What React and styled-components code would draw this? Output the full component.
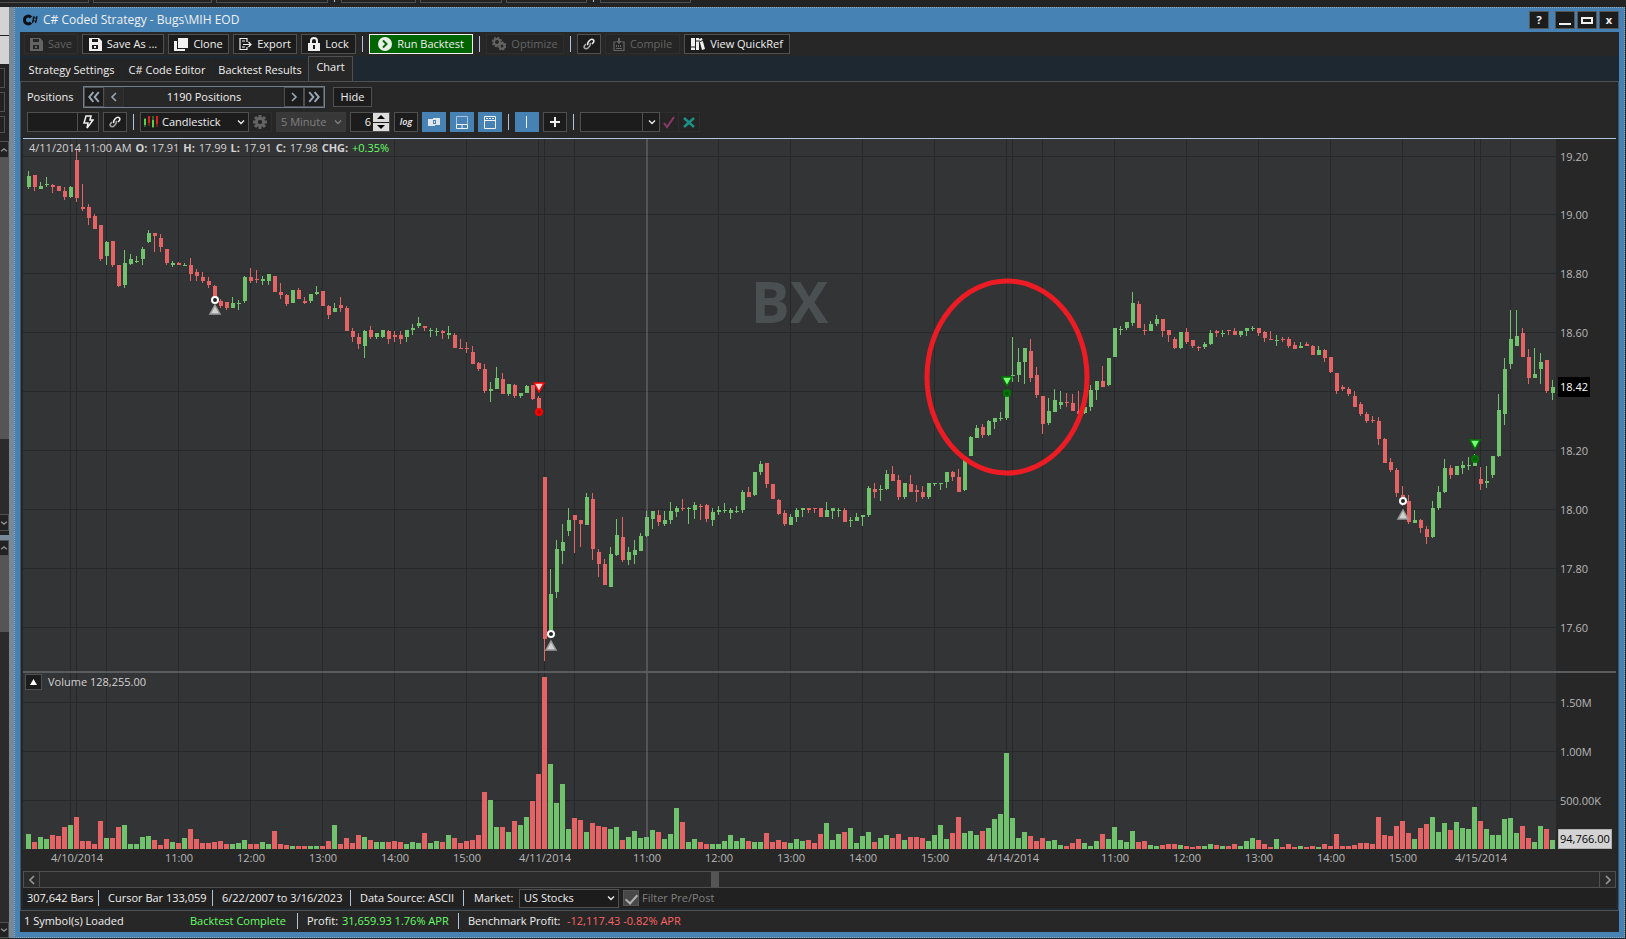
import styled, { createGlobalStyle, css } from 'styled-components';

const GlobalStyle = createGlobalStyle`
  * {
    box-sizing: border-box;
  }
  body {
    margin: 0;
    background: #232323;
    color: #f0f0f0;
    font: 11px/16px 'Open Sans', 'Noto Sans', sans-serif;
  }
  button, input, select {
    font: inherit;
    color: inherit;
    border-radius: 0;
    margin: 0;
    padding: 0;
  }
`;

const GREEN = '#70c26d';
const RED = '#e46466';

// direction, high, body top, body bottom, low, volume
const BARS = `
g 32 37 48 50 15,r 36 36 48 52 7,g 43 47 50 50 12,g 38 45 46 48 10,r 45 46 48 54 14,r 47 47 52 52 13,
r 48 52 58 61 22,g 47 48 58 59 24,r 10 21 59 63 32,r 45 68 70 72 8,r 65 68 79 86 8,r 75 77 90 90 5,
r 86 86 120 122 28,g 102 103 117 126 11,r 102 102 126 128 11,r 126 126 147 148 22,g 111 124 146 149 24,g 115 120 125 126 5,
g 117 122 123 124 5,g 108 110 120 126 12,g 91 94 103 104 13,r 94 94 97 113 9,r 95 99 108 113 4,r 110 110 124 126 10,
g 122 124 126 128 7,r 123 124 126 126 6,g 124 126 127 127 11,r 119 126 135 142 20,r 130 133 137 142 10,r 133 138 142 144 6,
r 138 142 146 149 6,r 146 147 160 160 7,r 160 162 167 169 8,r 163 163 169 171 5,g 158 164 169 169 5,g 161 164 165 171 6,
g 137 138 162 164 9,r 129 138 142 144 5,r 131 140 141 144 5,g 137 140 142 146 7,g 135 135 142 146 5,r 137 137 153 153 18,
r 144 153 156 160 5,r 155 156 165 167 4,g 151 151 164 164 3,r 149 151 160 160 3,r 158 162 164 165 3,g 155 155 162 164 3,
g 147 153 155 156 3,r 152 152 167 167 3,r 166 167 176 180 8,g 164 169 173 173 24,r 158 166 169 173 5,r 167 169 192 192 11,
r 189 192 198 203 6,r 194 198 205 210 14,g 191 192 207 219 12,r 187 191 198 200 9,g 194 194 198 200 7,g 191 191 198 199 7,
r 191 192 200 205 7,r 192 196 198 203 8,r 192 196 200 205 7,g 191 191 198 203 5,g 185 189 191 196 7,g 178 184 187 189 6,
r 187 187 189 192 16,g 189 191 192 198 6,g 189 192 193 197 8,r 191 192 194 200 7,g 187 194 196 200 14,r 194 196 209 209 11,
r 200 209 210 210 6,r 203 209 210 214 8,r 207 213 225 225 9,r 223 224 230 232 14,r 225 230 252 254 57,g 243 250 252 263 49,
g 228 239 250 250 22,r 234 240 255 255 22,g 245 245 255 257 17,r 245 246 257 259 28,g 254 254 257 259 24,g 246 247 254 254 32,
r 246 246 260 261 48,r 257 259 273 273 75,r 338 338 500 522 172,g 430 455 491 494 85,g 401 410 453 459 46,g 385 403 412 425 65,
g 369 381 392 397 20,r 376 376 381 414 31,r 381 381 385 408 29,g 354 358 386 386 17,r 354 360 410 421 26,r 410 413 425 438 23,
r 420 425 446 446 22,g 408 415 448 448 20,g 380 396 416 417 22,r 378 398 421 423 9,g 408 413 421 426 12,g 401 411 416 425 18,
g 394 397 412 412 11,g 372 378 397 398 12,g 372 372 380 390 19,r 371 376 383 387 17,g 372 381 385 387 10,g 363 372 381 385 15,
g 367 369 373 378 41,r 360 369 370 372 27,g 368 369 370 385 7,g 363 366 371 380 10,r 365 367 368 381 7,r 365 366 380 383 5,
g 369 373 381 387 5,g 367 371 373 376 5,g 364 371 372 374 8,g 369 371 374 380 14,g 367 372 373 374 8,g 351 353 371 374 11,
r 348 353 358 358 8,g 333 333 356 357 7,g 322 325 333 336 7,r 324 324 345 349 16,r 345 345 360 360 7,r 360 361 375 376 9,
r 371 374 385 387 7,g 375 378 386 386 6,g 369 371 378 383 10,g 369 369 371 378 8,r 369 369 371 374 9,r 369 369 370 374 6,
r 369 369 378 378 15,g 363 371 378 378 26,g 369 369 372 380 9,g 369 371 372 378 15,r 369 371 383 383 17,g 378 381 382 388 21,
g 374 378 382 382 6,g 376 376 378 387 13,g 347 349 376 378 17,r 344 350 353 359 7,g 346 350 351 362 11,g 331 335 350 351 14,
r 327 335 342 342 11,r 336 341 358 361 15,g 344 344 358 360 9,r 336 345 353 353 12,r 346 351 353 363 12,r 347 353 358 360 11,
g 344 344 358 360 8,g 344 344 345 347 14,g 344 344 345 351 24,g 333 333 343 349 10,r 332 333 338 342 16,r 330 338 353 353 32,
g 321 321 351 352 16,g 297 298 317 317 18,g 286 289 299 299 14,r 285 288 296 299 18,g 281 282 296 297 21,g 279 279 283 290 30,
g 273 279 280 282 35,g 251 253 279 281 96,g 198 236 237 243 31,g 209 223 236 243 11,g 209 209 223 245 17,r 200 212 239 243 13,
r 228 236 256 259 8,r 257 257 285 295 11,g 259 272 284 286 8,g 250 261 273 273 9,g 252 263 266 270 4,r 254 263 264 268 3,
r 255 264 272 272 6,r 252 272 275 275 10,g 267 268 274 275 6,g 246 251 268 272 3,g 242 242 251 261 8,r 227 242 248 248 15,
g 219 219 246 247 10,g 189 189 218 218 22,g 187 190 191 196 9,g 183 183 189 191 7,g 153 164 184 187 18,r 162 165 189 189 7,
r 185 191 192 196 8,g 182 185 192 192 4,g 176 180 185 187 3,r 180 180 192 198 4,r 191 191 196 203 5,r 198 200 209 210 5,
g 193 193 209 210 4,r 189 193 203 205 3,r 201 201 207 209 2,r 207 208 209 212 3,g 203 205 208 210 3,g 191 194 205 206 5,
r 191 192 194 198 4,g 191 194 195 198 3,r 191 191 192 196 3,r 189 192 196 196 5,g 192 192 196 198 3,g 189 189 192 197 8,
g 187 189 190 192 11,r 189 189 194 197 9,r 192 193 199 203 5,r 192 200 201 201 2,g 196 201 202 207 10,r 198 200 201 203 2,
r 198 200 207 209 5,r 203 206 210 210 2,g 203 207 209 209 3,r 203 205 207 207 2,r 206 207 216 216 3,g 207 211 216 216 2,
r 210 211 219 223 5,r 218 218 233 234 3,r 234 234 252 255 15,r 246 248 250 252 3,r 248 250 255 257 3,r 252 257 268 268 4,
r 263 265 275 277 6,r 273 275 282 284 6,r 277 281 282 284 5,r 278 282 300 306 32,r 299 300 324 324 14,r 319 323 331 333 13,
r 329 331 354 358 23,r 347 356 362 367 28,r 356 362 383 385 16,g 371 381 384 384 10,r 380 381 389 394 21,r 387 390 398 405 25,
g 362 369 398 399 32,g 347 353 369 371 17,g 320 329 353 354 26,r 326 329 336 340 19,g 327 327 336 336 27,g 322 326 329 335 21,
g 318 326 327 331 20,g 315 318 327 327 42,r 328 340 345 351 28,g 327 342 344 349 20,g 317 317 336 339 14,g 255 271 317 318 14,
g 219 230 275 286 30,g 171 200 225 230 31,g 171 197 207 207 16,r 189 194 218 218 23,r 210 218 239 245 11,g 209 235 239 239 7,
g 214 223 230 245 23,r 221 221 252 254 20,g 241 248 254 261 9`
  .trim()
  .split(',')
  .map((bar, i) => {
    const [dir, ...rest] = bar.trim().split(' ');
    const [high, top, bottom, low, volume] = rest.map(Number);
    return { x: 4 + i * 6, color: dir === 'g' ? GREEN : RED, high, top, bottom, low, volume };
  });

const PLOT_W = 1533;
const PRICE_H = 532;
const VOLUME_H = 176;
const CURSOR_X = 623;

const GRID_X = [
  47, 53, 83, 155, 227, 299, 371, 443, 515, 521, 551, 695, 767, 839, 911, 983, 989, 1019, 1091, 1163,
  1235, 1307, 1379, 1451, 1457, 1487,
];
const PRICE_TICKS = [
  [17, '19.20'], [75, '19.00'], [134, '18.80'], [193, '18.60'], [252, ''],
  [311, '18.20'], [370, '18.00'], [429, '17.80'], [488, '17.60'],
];
const VOLUME_TICKS = [[29, '1.50M'], [78, '1.00M'], [127, '500.00K']];
const TIME_TICKS = [
  [54, '4/10/2014'], [156, '11:00'], [228, '12:00'], [300, '13:00'], [372, '14:00'], [444, '15:00'],
  [522, '4/11/2014'], [624, '11:00'], [696, '12:00'], [768, '13:00'], [840, '14:00'], [912, '15:00'],
  [990, '4/14/2014'], [1092, '11:00'], [1164, '12:00'], [1236, '13:00'], [1308, '14:00'], [1380, '15:00'],
  [1458, '4/15/2014'],
];

/* ---------- desktop and window frame ---------- */

const Desktop = styled.div`
  display: flex;
  flex-direction: column;
  height: 100vh;
  overflow: hidden;
`;

const BackToolbar = styled.div`
  display: flex;
  gap: 4px;
  height: 7px;
  flex: none;
`;

const BackButton = styled.div`
  width: ${(p) => p.$w}px;
  height: 3px;
  border: 1px solid #505050;
  border-top: 0;
  border-left-width: ${(p) => (p.$first ? 0 : 1)}px;
`;

const BackSep = styled.div`
  width: 1px;
  height: 2px;
  margin: 0 2px;
  background: #b0c4de;
`;

const Work = styled.div`
  display: flex;
  flex: 1;
  min-height: 0;
  padding: 0 1px 1px 0;
`;

const Side = styled.div`
  display: flex;
  flex-direction: column;
  width: 9px;
  overflow: hidden;
`;

const SideBlock = styled.div`
  flex: ${(p) => (p.$grow ? 1 : 'none')};
  height: ${(p) => p.$h}px;
  margin-top: ${(p) => p.$mt || 0}px;
  background: ${(p) => p.$bg || '#222'};
  ${(p) =>
    p.$box &&
    css`
      border: 1px solid #505050;
      border-left: 0;
      width: 5px;
    `}
`;

const SideArrow = styled(SideBlock)`
  display: flex;
  align-items: center;
  border: 1px solid #505050;
  border-left: 0;
  color: #999;
`;

const Gutter = styled.div`
  width: 5px;
  background: #778899;
`;

const Window = styled.main`
  display: flex;
  flex-direction: column;
  flex: 1;
  min-width: 0;
  padding: 0 5px 5px;
  border: 1px dotted #98a4ae;
  background: #4682b4;
`;

const TitleBar = styled.header`
  display: flex;
  align-items: center;
  height: 24px;
  padding-left: 3px;
`;

const Title = styled.h1`
  flex: 1;
  margin: 0 0 0 5px;
  font-size: 12px;
  font-weight: 400;
`;

const WindowButton = styled.button`
  display: grid;
  place-items: center;
  width: 20px;
  height: 18px;
  margin-left: ${(p) => p.$gap || 2}px;
  border: 1px solid #555;
  background: #1c1c1c;
  font-weight: 700;
`;

const Body = styled.div`
  display: flex;
  flex-direction: column;
  flex: 1;
  min-height: 0;
  background: #272727;
`;

/* ---------- toolbars ---------- */

const Toolbar = styled.div`
  display: flex;
  align-items: center;
  gap: 4px;
  height: 24px;
  padding: 0 4px;
`;

const Sep = styled.span`
  flex: none;
  width: 1px;
  height: 16px;
  margin: 0 2px;
  background: #b0c4de;
`;

const Button = styled.button`
  display: flex;
  flex: none;
  align-items: center;
  justify-content: center;
  gap: 5px;
  width: ${(p) => p.$w || 24}px;
  height: 20px;
  border: 1px solid #505050;
  background: #1c1c1c;
  white-space: nowrap;
  svg {
    flex: none;
  }
  &:disabled {
    border-color: #2e2e2e;
    background: #252525;
    color: #646464;
  }
  ${(p) =>
    p.$run &&
    css`
      border-color: #f0f0f0;
      background: #006400;
    `}
  ${(p) =>
    p.$active &&
    css`
      border-color: #4682b4;
      background: #4682b4;
    `}
`;

const TabBar = styled.nav`
  display: flex;
  align-items: flex-end;
  height: 25px;
  padding-left: 2px;
  background: #1e2830;
`;

const Tab = styled.button`
  width: ${(p) => p.$w}px;
  height: 22px;
  margin-right: 1px;
  border: 0;
  background: #242424;
  white-space: nowrap;
  ${(p) =>
    p.$active &&
    css`
      height: 25px;
      margin: 0;
      padding-bottom: 4px;
      border: 1px solid #505050;
      border-bottom: 0;
      background: #272727;
    `}
`;

const Panel = styled.section`
  display: flex;
  flex-direction: column;
  flex: 1;
  min-height: 0;
  padding: 0 2px 2px;
  border: 1px solid #505050;
  background: #1e2830;
`;

const Controls = styled.div`
  display: flex;
  flex-direction: column;
  gap: 4px;
  padding: 4px 4px 6px;
  border-bottom: 1px solid #b0c4de;
  background: #272727;
`;

const Row = styled.div`
  display: flex;
  align-items: center;
  gap: 4px;
`;

const PositionsLabel = styled.span`
  width: 52px;
`;

const Pager = styled.div`
  display: flex;
  width: 242px;
  height: 22px;
  margin-right: 4px;
  border: 1px solid #708090;
`;

const PagerButton = styled.button`
  display: grid;
  place-items: center;
  width: 20px;
  border: 1px solid #505050;
  background: #1c1c1c;
  color: #9aa7b5;
  &:disabled {
    border-color: #303030;
    background: #2a2a2a;
  }
`;

const PagerText = styled.span`
  flex: 1;
  padding-top: 2px;
  text-align: center;
`;

const Joined = styled.div`
  display: flex;
  > * + * {
    margin-left: -1px;
  }
`;

const TextBox = styled.input`
  width: ${(p) => p.$w}px;
  height: 20px;
  padding: 0 4px;
  border: 1px solid #505050;
  background: #1c1c1c;
  outline: none;
`;

const Combo = styled.span`
  position: relative;
  display: inline-flex;
  align-items: center;
  width: ${(p) => p.$w}px;
  height: ${(p) => p.$h || 20}px;
  border: 1px solid ${(p) => (p.$off ? '#3a3a3a' : '#505050')};
  background: ${(p) => (p.$off ? '#383838' : '#1c1c1c')};
  color: ${(p) => (p.$off ? '#808080' : '#f0f0f0')};
`;

const Select = styled.select`
  flex: 1;
  min-width: 0;
  height: 100%;
  padding-left: 4px;
  border: 0;
  background: none;
  appearance: none;
  outline: none;
  &:disabled {
    color: inherit;
    opacity: 1;
  }
`;

const ComboArrow = styled.svg`
  position: absolute;
  top: 50%;
  right: 3px;
  transform: translateY(-50%);
  pointer-events: none;
`;

const ComboIcon = styled.svg`
  flex: none;
  margin-left: 3px;
`;

const ComboDivider = styled.span`
  width: 1px;
  height: 100%;
  margin-right: 16px;
  background: #505050;
`;

const NumberBox = styled.div`
  display: flex;
  width: 40px;
  height: 20px;
  border: 1px solid #505050;
  background: #1c1c1c;
`;

const NumberInput = styled.input`
  flex: 1;
  min-width: 0;
  padding-right: 1px;
  border: 0;
  background: none;
  text-align: right;
  outline: none;
`;

const Spinner = styled.div`
  display: flex;
  flex-direction: column;
  width: 16px;
  gap: 1px;
  margin-left: 1px;
`;

const SpinButton = styled.button`
  display: grid;
  flex: 1;
  place-items: center;
  border: 0;
  background: #dcdcdc;
  color: #000;
`;

const LogText = styled.i`
  font-size: 9px;
  font-weight: 600;
`;

/* ---------- chart ---------- */

const Chart = styled.div`
  display: grid;
  grid-template-columns: minmax(0, 1fr) 60px;
  grid-template-rows: minmax(0, 532fr) 2px minmax(0, 176fr) 22px;
  flex: 1;
  min-height: 0;
  background: #272727;
`;

const Pane = styled.div`
  position: relative;
  background: #333435;
`;

const Plot = styled.svg`
  position: absolute;
  inset: 0;
  width: 100%;
  height: 100%;
`;

const Axis = styled.div`
  position: relative;
`;

const AxisSvg = styled.svg`
  display: block;
  width: 100%;
  height: 100%;
  fill: #b8b8b8;
  font-size: 11px;
`;

const Divider = styled.div`
  grid-column: 1 / -1;
  background: #5a5d5f;
`;

const Watermark = styled.div`
  position: absolute;
  inset: 0 0 39%;
  display: grid;
  place-items: center;
  color: #4a4f51;
  font-size: 58px;
  font-weight: 700;
`;

const Quote = styled.div`
  position: relative;
  padding: 1px 0 0 6px;
  color: #d3d3d3;
  b {
    margin: 0 1px;
  }
`;

const Gain = styled.span`
  color: #66ff66;
`;

const Loss = styled.span`
  color: #ff6464;
`;

const VolumeHead = styled.div`
  position: relative;
  display: flex;
  align-items: center;
  gap: 6px;
  padding: 1px 2px;
  color: #d3d3d3;
`;

const Collapse = styled.button`
  display: grid;
  place-items: center;
  width: 17px;
  height: 16px;
  border: 1px solid #505050;
  background: #1c1c1c;
`;

const Tag = styled.span`
  position: absolute;
  left: 2px;
  padding: 2px;
  background: #000;
  color: #fff;
`;

const PriceTag = styled(Tag)`
  top: 44.7%;
`;

const VolumeTag = styled(Tag)`
  bottom: 0;
  padding: 1px;
  border: 1px solid #b0b0b0;
  background: #d3d3d3;
  color: #000;
  white-space: nowrap;
`;

const ScrollBar = styled.div`
  display: flex;
  height: 17px;
  border: 1px solid #505050;
  background: #2b2b2b;
`;

const ScrollButton = styled.button`
  display: grid;
  place-items: center;
  width: 16px;
  border: 0 solid #505050;
  border-width: ${(p) => (p.$end ? '0 0 0 1px' : '0 1px 0 0')};
  background: #2b2b2b;
  color: #999;
`;

const Track = styled.div`
  flex: 1;
  display: grid;
  grid-template-columns: 671fr 8px 881fr;
`;

const Thumb = styled.div`
  grid-column: 2;
  background: #555;
`;

/* ---------- status lines ---------- */

const InfoBar = styled.div`
  display: flex;
  align-items: center;
  height: 20px;
  padding-left: 4px;
  background: #212121;
  white-space: nowrap;
`;

const InfoItem = styled.span`
  width: ${(p) => p.$w}px;
`;

const InfoSep = styled(Sep)`
  margin: 0 9px 0 0;
`;

const MarketLabel = styled.label`
  width: 45px;
  margin-left: 1px;
`;

const Filter = styled.label`
  display: flex;
  align-items: center;
  gap: 3px;
  margin-left: 4px;
  color: #808080;
`;

const CheckBox = styled.input`
  display: grid;
  place-items: center;
  width: 16px;
  height: 16px;
  border: 1px solid #555;
  background: #484848;
  appearance: none;
  &:checked::after {
    content: '';
    width: 5px;
    height: 10px;
    border: solid #b0b0b0;
    border-width: 0 2px 2px 0;
    transform: rotate(42deg);
  }
`;

const StatusBar = styled.footer`
  display: flex;
  align-items: center;
  height: 21px;
  padding: 0 0 2px 4px;
  white-space: nowrap;
`;

const GainItem = styled(InfoItem)`
  color: #66ff66;
`;

/* ---------- icons ---------- */

const Chevron = ({ dir = 'down', double, size = 10 }) => {
  const d = {
    down: 'M1.5 3.5 5 6.5 8.5 3.5',
    up: 'M1.5 6.5 5 3.5 8.5 6.5',
    left: double ? 'M4.5 1 1 5l3.5 4M9 1 5.5 5 9 9' : 'M7 1 3 5l4 4',
    right: double ? 'M1 1l3.5 4L1 9M5.5 1 9 5 5.5 9' : 'M3 1l4 4-4 4',
  }[dir];
  return (
    <svg width={size} height={size} viewBox="0 0 10 10" fill="none" stroke="currentColor" strokeWidth="1.6">
      <path d={d} />
    </svg>
  );
};

const DownArrow = () => (
  <ComboArrow width="8" height="8" viewBox="0 0 8 8" fill="none" stroke="currentColor" strokeWidth="1.3">
    <path d="M1 2.5 4 5.500 7 2.5" />
  </ComboArrow>
);

const Icon = ({ w = 14, children }) => (
  <svg width={w} height="14" viewBox={`0 0 ${w} 14`} fill="currentColor" aria-hidden="true">
    {children}
  </svg>
);

const SaveIcon = () => (
  <Icon w={13}>
    <path fillRule="evenodd" d="M0 1h10l3 3v10H0zM3 2v3h6V2zM3 8v4h6V8zM5 9h2v2H5z" />
  </Icon>
);

const CloneIcon = () => (
  <Icon>
    <path d="M4 1h10v10H4z" />
    <path d="M0 4h3v8h8v2H0z" />
  </Icon>
);

const ExportIcon = () => (
  <Icon w={13}>
    <path
      fill="none"
      stroke="currentColor"
      strokeWidth="1.2"
      d="M8 5V1.5H1v11h7V10M3 4h3M3 10h3M4 7.5h8M9.500 5l2.5 2.5L9.500 10"
    />
  </Icon>
);

const LockIcon = () => (
  <Icon w={12}>
    <path fill="none" stroke="currentColor" strokeWidth="2" d="M3 7V4a3 3 0 0 1 6 0v3" />
    <path fillRule="evenodd" d="M0 6h12v8H0zM5 8v4h2V8z" />
  </Icon>
);

const RunIcon = () => (
  <Icon>
    <circle cx="7" cy="7" r="7" fill="#e8efe8" />
    <path d="M5 3.5 8.500 7 5 10.5" fill="none" stroke="#006400" strokeWidth="2" />
  </Icon>
);

const GearIcon = () => (
  <Icon>
    <circle cx="7" cy="7" r="3.5" fill="none" stroke="currentColor" strokeWidth="3" />
    <path
      stroke="currentColor"
      strokeWidth="3"
      d="M7 0v3M7 11v3M0 7h3M11 7h3M2 2l2 2M10 10l2 2M12 2l-2 2M4 10l-2 2"
    />
    <circle cx="7" cy="7" r="2" fill="#252525" />
  </Icon>
);

const GearsIcon = () => (
  <Icon>
    <g fill="none" stroke="currentColor">
      <circle cx="5" cy="5" r="3" strokeWidth="2" />
      <circle cx="5" cy="5" r="4.5" strokeWidth="1.5" strokeDasharray="2 1.5" />
      <circle cx="10" cy="9" r="2.5" strokeWidth="2" />
      <circle cx="10" cy="9" r="3.8" strokeWidth="1.5" strokeDasharray="2 1.4" />
    </g>
  </Icon>
);

const LinkIcon = () => (
  <Icon w={12}>
    <g fill="none" stroke="currentColor" strokeWidth="1.6">
      <path d="M5 8c-1-1.5 0-3 1.500-4.500s3-1.500 4-.5 0 2.500-1.500 4" />
      <path d="M7 6c1 1.500 0 3-1.500 4.500s-3 1.500-4 .5 0-2.500 1.500-4" opacity=".65" />
    </g>
  </Icon>
);

const CompileIcon = () => (
  <Icon w={12}>
    <path fill="none" stroke="currentColor" strokeWidth="1.2" d="M3 5H1v8.5h10V5H9M3 11.5h6" />
    <path d="M5 1h2v3h2L6 7 3 4h2zM3 8h1v2H3zM5 8h1v2H5zM7 8h1v2H7z" />
  </Icon>
);

const BooksIcon = () => (
  <Icon w={14}>
    <path d="M0 1h4v12H0zM5 1h3v12H5zM8 2l3-1 3 11-3 1z" />
    <path d="M5 4h3M9 4.5l3-1M0 10h4M4.500 1v12" stroke="#1c1c1c" />
  </Icon>
);

const BoltIcon = () => (
  <Icon w={12}>
    <path d="M4 1h5L8 5h3L5 13l1-5H2z" fill="none" stroke="currentColor" strokeWidth="1.5" />
  </Icon>
);

const ShareIcon = () => (
  <Icon>
    <path fillRule="evenodd" d="M1 4h5V3h7v7H8v1H1zM6 5v4h3V5z" fill="#dfe6ec" />
    <path d="M7 6h1v2H7z" fill="#dfe6ec" />
  </Icon>
);

const PaneIcon = () => (
  <Icon>
    <path d="M1.500 1.500h11v8h-11z" fill="none" stroke="#a9c4dc" />
    <path d="M1.500 9.500h11v4h-11zM7 9v4" fill="none" stroke="#f0f0f0" />
  </Icon>
);

const WindowIcon = () => (
  <Icon>
    <path d="M1.500 1.500h11v12h-11zM1 5.500h12" fill="none" stroke="#f0f0f0" />
    <path d="M3 3h2v1H3zM6 3h2v1H6zM9 3h2v1H9z" />
  </Icon>
);

const CandleIcon = () => (
  <ComboIcon width="14" height="14" viewBox="0 0 14 14" aria-hidden="true">
    <path d="M1 3v9M9 1v12" stroke="#3fae3a" strokeWidth="1" />
    <path d="M1 4v6M9 5v7" stroke="#55d048" strokeWidth="2" />
    <path d="M5 1v7M13 1v8" stroke="#e0201c" strokeWidth="2" />
    <path d="M5 8v3M13 9v3" stroke="#e0201c" />
  </ComboIcon>
);

const CSharpIcon = () => (
  <svg width="15" height="12" viewBox="0 0 15 12" aria-hidden="true" fill="none" stroke="#0c1014">
    <path d="M8 3.500C6 1 1.500 2 1.500 6S6 11 8 8.500" strokeWidth="3" />
    <path d="M11 2 9.500 9M14 2l-1.500 7M9.500 4h5M9 7h5" strokeWidth="1.2" />
  </svg>
);

/* ---------- pieces ---------- */

const EntryMark = ({ x, y, tip }) => (
  <g>
    <circle cx={x} cy={y} r="3" fill="#222" stroke="#fff" strokeWidth="2" />
    <path d={`M${x} ${tip - 1}l5 9h-10z`} fill="#d0d0d0" stroke="#999" strokeWidth="1.5" />
  </g>
);

const ExitMark = ({ x, y, tip, fill, stroke, dot }) => (
  <g stroke={stroke}>
    <path d={`M${x} ${tip}l-5 -9h10z`} fill={fill} strokeWidth="1.5" />
    <circle cx={x} cy={y} r="3" fill={dot} strokeWidth="2" />
  </g>
);

const GridLines = ({ rows, height }) => (
  <g stroke="#272829" shapeRendering="crispEdges">
    {GRID_X.map((x) => (
      <path key={x} d={`M${x + 0.5} 0V${height}`} />
    ))}
    {rows.map(([y]) => (
      <path key={y} d={`M0 ${y + 0.5}H${PLOT_W}`} />
    ))}
  </g>
);

const CursorLine = ({ height }) => (
  <rect x={CURSOR_X} width="2" height={height} fill="#a0a0a0" opacity=".3" shapeRendering="crispEdges" />
);

const PricePlot = () => (
  <Plot viewBox={`0 0 ${PLOT_W} ${PRICE_H}`} preserveAspectRatio="none">
    <GridLines rows={PRICE_TICKS} height={PRICE_H} />
    <g shapeRendering="crispEdges">
      {BARS.map((b) => (
        <g key={b.x} fill={b.color}>
          <rect x={b.x + 1} y={b.high} width="1" height={b.low - b.high} />
          <rect x={b.x} y={b.top} width="4" height={b.bottom - b.top} />
        </g>
      ))}
    </g>
    <CursorLine height={PRICE_H} />
    <EntryMark x={192} y={161} tip={167} />
    <EntryMark x={528} y={495} tip={503} />
    <EntryMark x={1380} y={362} tip={372} />
    <ExitMark x={516} y={273} tip={253} fill="#ffd0d0" stroke="#f00" dot="#c00000" />
    <ExitMark x={984} y={254} tip={247} fill="#78ff78" stroke="#007800" dot="#005a00" />
    <ExitMark x={1452} y={320} tip={310} fill="#78ff78" stroke="#007800" dot="#005a00" />
    <ellipse cx="984" cy="238" rx="80" ry="96" fill="none" stroke="#ed1c24" strokeWidth="5" />
  </Plot>
);

const VolumePlot = () => (
  <Plot viewBox={`0 0 ${PLOT_W} ${VOLUME_H}`} preserveAspectRatio="none">
    <GridLines rows={VOLUME_TICKS} height={VOLUME_H} />
    <g shapeRendering="crispEdges">
      {BARS.map((b) => (
        <rect key={b.x} x={b.x - 1} y={VOLUME_H - b.volume} width="5" height={b.volume} fill={b.color} />
      ))}
    </g>
    <CursorLine height={VOLUME_H} />
  </Plot>
);

const ValueAxis = ({ ticks, height, children }) => (
  <Axis>
    <AxisSvg>
      {ticks.map(([y, label]) => (
        <text key={y} x="4" y={`${(y / height) * 100}%`} dy="5">
          {label}
        </text>
      ))}
    </AxisSvg>
    {children}
  </Axis>
);

const TimeAxis = () => (
  <AxisSvg textAnchor="middle">
    {TIME_TICKS.map(([x, label]) => (
      <text key={x} x={`${(x / PLOT_W) * 100}%`} y="13">
        {label}
      </text>
    ))}
  </AxisSvg>
);

const SideStrip = () => (
  <Side>
    <SideBlock $h={28} $bg="#d3d3d3" />
    <SideBlock $h={28} $mt={1} $bg="#d3d3d3" />
    <SideBlock $box $h={20} $mt={4} />
    <SideBlock $box $h={20} $mt={4} />
    <SideBlock $box $h={17} $mt={4} />
    <SideArrow $h={17} $mt={8}>
      <Chevron dir="up" />
    </SideArrow>
    <SideBlock $h={281} $bg="#555" />
    <SideBlock $h={75} $bg="#2b2b2b" />
    <SideArrow $h={17}>
      <Chevron />
    </SideArrow>
    <SideBlock $h={5} $mt={4} $bg="#778899" />
    <SideArrow $h={16}>
      <Chevron dir="up" />
    </SideArrow>
    <SideBlock $h={76} $bg="#555" />
    <SideBlock $grow $bg="#2b2b2b" />
    <SideArrow $h={16}>
      <Chevron />
    </SideArrow>
  </Side>
);

const MainToolbar = () => (
  <Toolbar>
    <Button $w={54} disabled><SaveIcon />Save</Button>
    <Button $w={82}><SaveIcon />Save As ...</Button>
    <Button $w={61}><CloneIcon />Clone</Button>
    <Button $w={64}><ExportIcon />Export</Button>
    <Button $w={55}><LockIcon />Lock</Button>
    <Sep />
    <Button $w={104} $run><RunIcon />Run Backtest</Button>
    <Sep />
    <Button $w={78} disabled><GearsIcon />Optimize</Button>
    <Sep />
    <Button aria-label="Link"><LinkIcon /></Button>
    <Button $w={75} disabled><CompileIcon />Compile</Button>
    <Button $w={106}><BooksIcon />View QuickRef</Button>
  </Toolbar>
);

const ChartControls = () => (
  <Controls>
    <Row>
      <PositionsLabel>Positions</PositionsLabel>
      <Pager>
        <PagerButton aria-label="First"><Chevron dir="left" double size={12} /></PagerButton>
        <PagerButton aria-label="Previous" disabled><Chevron dir="left" /></PagerButton>
        <PagerText>1190 Positions</PagerText>
        <PagerButton aria-label="Next"><Chevron dir="right" /></PagerButton>
        <PagerButton aria-label="Last"><Chevron dir="right" double size={12} /></PagerButton>
      </Pager>
      <Button $w={39}>Hide</Button>
    </Row>
    <Row>
      <Joined>
        <TextBox $w={51} aria-label="Symbol" />
        <Button $w={22} aria-label="Go"><BoltIcon /></Button>
      </Joined>
      <Button aria-label="Link symbol"><LinkIcon /></Button>
      <Sep />
      <Joined>
        <Combo $w={109}>
          <CandleIcon />
          <Select aria-label="Chart style" defaultValue="c">
            <option value="c">Candlestick</option>
          </Select>
          <DownArrow />
        </Combo>
        <Button disabled aria-label="Style settings"><GearIcon /></Button>
      </Joined>
      <Combo $w={70} $off>
        <Select aria-label="Scale" disabled defaultValue="5">
          <option value="5">5 Minute</option>
        </Select>
        <DownArrow />
      </Combo>
      <NumberBox>
        <NumberInput aria-label="Bar spacing" defaultValue="6" />
        <Spinner>
          <SpinButton aria-label="Wider">
            <svg width="8" height="4" viewBox="0 0 8 4"><path d="M0 4 4 0l4 4z" /></svg>
          </SpinButton>
          <SpinButton aria-label="Narrower">
            <svg width="8" height="4" viewBox="0 0 8 4"><path d="M0 0l4 4 4-4z" /></svg>
          </SpinButton>
        </Spinner>
      </NumberBox>
      <Button><LogText>log</LogText></Button>
      <Button $active aria-label="Labels"><ShareIcon /></Button>
      <Button $active aria-label="Lower pane"><PaneIcon /></Button>
      <Button $active aria-label="Data window"><WindowIcon /></Button>
      <Sep />
      <Button $active aria-label="Vertical cursor"><Icon><path d="M6 1h1v12H6z" /></Icon></Button>
      <Button aria-label="Cross cursor"><Icon w={12}><path d="M5 2h2v4h4v2H7v4H5V8H1V6h4z" /></Icon></Button>
      <Sep />
      <Joined>
        <Combo $w={80}>
          <Select aria-label="Drawing" defaultValue="">
            <option value="" />
          </Select>
          <ComboDivider />
          <DownArrow />
        </Combo>
        <Button $w={20} disabled aria-label="Apply">
          <Icon w={12}><path d="M1 8l3 4 7-10" fill="none" stroke="#8b3a6b" strokeWidth="2" /></Icon>
        </Button>
        <Button $w={22} disabled aria-label="Clear">
          <Icon w={12}><path d="M1 3l10 9M11 3 1 12" fill="none" stroke="#1c8f86" strokeWidth="2.5" /></Icon>
        </Button>
      </Joined>
    </Row>
  </Controls>
);

const ChartView = () => (
  <Chart>
    <Pane>
      <Watermark>BX</Watermark>
      <PricePlot />
      <Quote>
        4/11/2014 11:00 AM <b>O:</b> 17.91 <b>H:</b> 17.99 <b>L:</b> 17.91 <b>C:</b> 17.98 <b>CHG:</b>{' '}
        <Gain>+0.35%</Gain>
      </Quote>
    </Pane>
    <ValueAxis ticks={PRICE_TICKS} height={PRICE_H}>
      <PriceTag>18.42</PriceTag>
    </ValueAxis>
    <Divider />
    <Pane>
      <VolumePlot />
      <VolumeHead>
        <Collapse aria-label="Collapse pane">
          <svg width="7" height="6" viewBox="0 0 7 6" fill="#fff"><path d="M3.500 0 7 6H0z" /></svg>
        </Collapse>
        Volume 128,255.00
      </VolumeHead>
    </Pane>
    <ValueAxis ticks={VOLUME_TICKS} height={VOLUME_H}>
      <VolumeTag>94,766.00</VolumeTag>
    </ValueAxis>
    <TimeAxis />
  </Chart>
);

const App = () => (
  <>
    <GlobalStyle />
    <Desktop>
      <BackToolbar>
        <BackButton $w={89} $first />
        <BackButton $w={119} />
        <BackButton $w={112} />
        <BackSep />
        <BackButton $w={75} />
        <BackButton $w={82} />
        <BackButton $w={81} />
        <BackSep />
        <BackButton $w={91} />
      </BackToolbar>
      <Work>
        <SideStrip />
        <Gutter />
        <Window>
          <TitleBar>
            <CSharpIcon />
            <Title>C# Coded Strategy - Bugs\MIH EOD</Title>
            <WindowButton $gap={6}>?</WindowButton>
            <WindowButton $gap={6} aria-label="Minimize">
              <svg width="12" height="10"><path d="M0 8h12v2H0z" fill="#f0f0f0" /></svg>
            </WindowButton>
            <WindowButton aria-label="Maximize">
              <svg width="12" height="8"><path d="M1 2h10v5H1z" fill="none" stroke="#f0f0f0" strokeWidth="2" /></svg>
            </WindowButton>
            <WindowButton aria-label="Close">x</WindowButton>
          </TitleBar>
          <Body>
            <MainToolbar />
            <TabBar>
              <Tab $w={99}>Strategy Settings</Tab>
              <Tab $w={90}>C# Code Editor</Tab>
              <Tab $w={94}>Backtest Results</Tab>
              <Tab $w={45} $active>Chart</Tab>
            </TabBar>
            <Panel>
              <ChartControls />
              <ChartView />
              <ScrollBar>
                <ScrollButton aria-label="Scroll left"><Chevron dir="left" /></ScrollButton>
                <Track><Thumb /></Track>
                <ScrollButton $end aria-label="Scroll right"><Chevron dir="right" /></ScrollButton>
              </ScrollBar>
              <InfoBar>
                <InfoItem $w={71}>307,642 Bars</InfoItem>
                <InfoSep />
                <InfoItem $w={104}>Cursor Bar 133,059</InfoItem>
                <InfoSep />
                <InfoItem $w={128}>6/22/2007 to 3/16/2023</InfoItem>
                <InfoSep />
                <InfoItem $w={103}>Data Source: ASCII</InfoItem>
                <InfoSep />
                <MarketLabel htmlFor="market">Market:</MarketLabel>
                <Combo $w={100} $h={19}>
                  <Select id="market" defaultValue="us">
                    <option value="us">US Stocks</option>
                  </Select>
                  <DownArrow />
                </Combo>
                <Filter>
                  <CheckBox type="checkbox" defaultChecked disabled />
                  Filter Pre/Post
                </Filter>
              </InfoBar>
            </Panel>
            <StatusBar>
              <InfoItem $w={166}>1 Symbol(s) Loaded</InfoItem>
              <GainItem $w={107}>Backtest Complete</GainItem>
              <InfoSep />
              <InfoItem $w={35}>Profit:</InfoItem>
              <GainItem $w={116}>31,659.93 1.76% APR</GainItem>
              <InfoSep />
              <InfoItem $w={99}>Benchmark Profit:</InfoItem>
              <Loss>-12,117.43 -0.82% APR</Loss>
            </StatusBar>
          </Body>
        </Window>
      </Work>
    </Desktop>
  </>
);

export default App;
